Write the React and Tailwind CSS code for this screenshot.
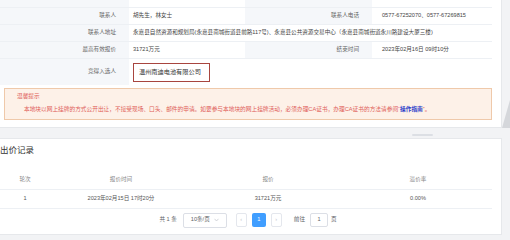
export default function App() {
  const label = "bg-[#f5f7fa] text-right pr-[13px] text-[#666] flex items-center justify-end";
  const value = "pl-[4px] text-[#444] flex items-center";

  return (
    <div className="relative flex w-[510px] h-[240px] overflow-hidden bg-[#f2f3f5] font-['Liberation_Sans','Noto_Sans_CJK_SC',sans-serif] text-[5.6px] leading-none">
      <div className="w-[502px] flex flex-col">
        {/* info card */}
        <div className="bg-white border-r border-b border-[#e6e8eb] pr-[9px] h-[128px] flex flex-col">
          <div className="grid grid-cols-[129px_116px_127px_120px] [&>div]:border-b [&>div]:border-[#edf0f4]">
            <div className={`${label} h-[8px]`}></div>
            <div className={`${value} h-[8px]`}></div>
            <div className={`${label} h-[8px]`}></div>
            <div className={`${value} h-[8px]`}></div>

            <div className={`${label} h-[17px]`}>联系人</div>
            <div className={`${value} h-[17px]`}>胡先生，林女士</div>
            <div className={`${label} h-[17px]`}>联系人电话</div>
            <div className={`${value} h-[17px] pl-[10px]`}>0577-67252070、0577-67269815</div>

            <div className={`${label} h-[17px]`}>联系人地址</div>
            <div className={`${value} h-[17px] col-span-3 whitespace-nowrap`}>
              永嘉县自然资源和规划局(永嘉县南城街道县前路117号)、永嘉县公共资源交易中心（永嘉县南城街道永川路建设大厦三楼)
            </div>

            <div className={`${label} h-[17px]`}>最高有效报价</div>
            <div className={`${value} h-[17px]`}>31721万元</div>
            <div className={`${label} h-[17px]`}>结束时间</div>
            <div className={`${value} h-[17px] pl-[10px]`}>2023年02月16日 09时10分</div>

            <div className={`${label} h-[26px] border-b-0!`}>竞得入选人</div>
            <div className={`${value} h-[26px] col-span-3 border-b-0!`}>
              <div className="w-[77px] h-[19px] border border-[#a8453f] flex items-center pl-[5px] text-[#333] text-[6.2px]">
                温州南迪电池有限公司
              </div>
            </div>
          </div>

          <div className="mt-[3px] ml-[4px] h-[32px] bg-[#fdf1e8] border border-[#efc9aa] text-[#e0605a] text-[5.7px] pt-[5px] pl-[12px]">
            <div>温馨提示</div>
            <div className="mt-[7px] pl-[7px] whitespace-nowrap">
              本地块以网上挂牌的方式公开出让，不接受现场、口头、邮件的申请。如要参与本地块的网上挂牌活动，必须办理CA证书，办理CA证书的方法请参阅“
              <span className="text-[#2b3cc8] font-bold">操作指南</span>”。
            </div>
          </div>
        </div>

        {/* gap with handle */}
        <div className="h-[10px] flex">
          <div className="ml-[412px] mt-[6px] w-[21px] h-[2px] rounded-full bg-[#dcdfe4]"></div>
        </div>

        {/* bid record card */}
        <div className="bg-white border-r border-t border-b border-[#e6e8eb] pr-[9px] h-[97px] flex flex-col">
          <div className="pt-[7px] text-[8.5px] text-[#333]">出价记录</div>

          <div className="mt-[17px] grid grid-cols-[50px_142px_152px_148px] text-center [&>div]:border-b [&>div]:border-[#edf0f4] [&>div]:flex [&>div]:items-center [&>div]:justify-center">
            <div className="h-[18px] text-[#888]">轮次</div>
            <div className="h-[18px] text-[#888]">报价时间</div>
            <div className="h-[18px] text-[#888]">报价</div>
            <div className="h-[18px] text-[#888]">溢价率</div>

            <div className="h-[19px] text-[#555]">1</div>
            <div className="h-[19px] text-[#555]">2023年02月15日 17时20分</div>
            <div className="h-[19px] text-[#555]">31721万元</div>
            <div className="h-[19px] text-[#555]">0.00%</div>
          </div>

          <div className="mt-[4px] flex items-center justify-center text-[#606266] h-[15px] pl-[4px]">
            <span>共 1 条</span>
            <div className="ml-[6px] w-[44px] h-[15px] border border-[#dcdfe6] rounded-[2px] flex items-center justify-between px-[7px]">
              <span>10条/页</span>
              <svg width="5" height="4" viewBox="0 0 5 4" className="text-[#c0c4cc]">
                <path d="M0.5 0.8 L2.5 3 L4.5 0.8" fill="none" stroke="currentColor" strokeWidth="0.7" />
              </svg>
            </div>
            <div className="ml-[9px] w-[11px] h-[14px] border border-[#e4e7ed] rounded-[2px] flex items-center justify-center text-[#c0c4cc]">‹</div>
            <div className="ml-[5px] w-[14px] h-[14px] rounded-[2px] bg-[#409eff] text-white flex items-center justify-center">1</div>
            <div className="ml-[5px] w-[11px] h-[14px] border border-[#e4e7ed] rounded-[2px] flex items-center justify-center text-[#c0c4cc]">›</div>
            <span className="ml-[12px]">前往</span>
            <div className="ml-[5px] w-[18px] h-[14px] border border-[#dcdfe6] rounded-[2px] flex items-center justify-center">1</div>
            <span className="ml-[3px]">页</span>
          </div>
        </div>
      </div>

      <svg className="absolute right-0 top-[100px]" width="8" height="28" viewBox="0 0 8 28">
        <polygon points="8,0 8,28 0,28" fill="#d5d7db" />
      </svg>
    </div>
  );
}
